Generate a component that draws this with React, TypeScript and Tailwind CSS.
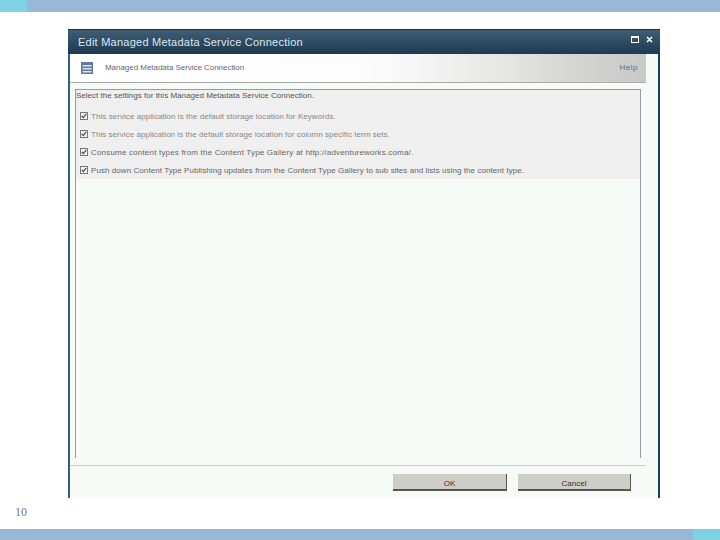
const rows = [
  { text: "This service application is the default storage location for Keywords.", cls: "text-[#888] tracking-[0.06px]" },
  { text: "This service application is the default storage location for column specific term sets.", cls: "text-[#888] tracking-[0.04px]" },
  { text: "Consume content types from the Content Type Gallery at http://adventureworks.coma/.", cls: "text-[#666] tracking-[0.19px]" },
  { text: "Push down Content Type Publishing updates from the Content Type Gallery to sub sites and lists using the content type.", cls: "text-[#666] tracking-[0.07px]" },
];

function Check() {
  return (
    <span className="flex h-[8px] w-[8px] shrink-0 items-center justify-center border border-[#777] bg-[#f4f4f4]">
      <svg width="6" height="6" viewBox="0 0 6 6" fill="none">
        <path d="M0.7 2.8 L2.3 4.7 L5.3 0.8" stroke="#444" strokeWidth="1.1" />
      </svg>
    </span>
  );
}

export default function App() {
  return (
    <div className="flex h-[540px] w-[720px] flex-col bg-white font-['Liberation_Sans',sans-serif]">
      <div className="flex h-3 shrink-0 bg-[#97b8d6]">
        <div className="w-[27px] bg-[#7fd1e4]" />
      </div>

      <div className="flex h-[486px] shrink-0 flex-col pt-[17px] pl-[68px]">
        <div className="flex h-[469px] w-[592px] flex-col border-r-2 border-l-2 border-r-[#17405f] border-l-[#2f6282] bg-[#f7fbf8]">
          <div className="-mx-0.5 flex h-[25px] shrink-0 items-center justify-between border-t border-[#1b3347] bg-gradient-to-b from-[#3f5d75] to-[#1d3a52] pr-[7px] pl-[10px]">
            <span className="text-[11px] leading-none tracking-[0.24px] text-[#dfe6eb]">
              Edit Managed Metadata Service Connection
            </span>
            <span className="mb-[6px] flex items-center gap-[7px]">
              <span className="h-[7px] w-[8px] border border-t-2 border-white" />
              <svg width="7" height="7" viewBox="0 0 7 7">
                <path d="M1 1 L6 6 M6 1 L1 6" stroke="#fff" strokeWidth="1.6" />
              </svg>
            </span>
          </div>

          <div className="flex h-[29px] w-[576px] shrink-0 items-center justify-between border-b border-[#a9aca8] bg-[linear-gradient(to_right,#ffffff_0%,#fdfdfd_50%,#f5f6f5_60%,#e6e7e5_75%,#d4d5d2_88%,#c9cac7_100%)] pr-[8px] pl-[11px]">
            <span className="flex items-center gap-[12px]">
              <svg width="12" height="12" viewBox="0 0 12 12">
                <rect x="0" y="0" width="12" height="12" fill="#5f7a9e" />
                <rect x="1.5" y="3" width="9" height="1.5" fill="#dfe6ee" />
                <rect x="1.5" y="6" width="9" height="1.5" fill="#dfe6ee" />
                <rect x="1.5" y="9" width="9" height="1.5" fill="#dfe6ee" />
              </svg>
              <span className="text-[8px] tracking-[-0.04px] text-[#667]">Managed Metadata Service Connection</span>
            </span>
            <span className="text-[8px] tracking-[0.5px] text-[#4a7096]">Help</span>
          </div>

          <div className="mt-[6px] ml-[5px] h-[369px] w-[566px] shrink-0 border-x border-t border-[#8d9ea6]">
            <div className="h-[89px] bg-[#efefef]">
              <div className="h-[12px] text-[8px] leading-[11px] tracking-[0.02px] text-[#555]">
                Select the settings for this Managed Metadata Service Connection.
              </div>
              <div className="flex flex-col gap-[9px] pt-[9px] pl-[4px]">
                {rows.map((r) => (
                  <div key={r.text} className="flex h-[9px] items-center gap-[3px]">
                    <Check />
                    <span className={`pt-[1px] text-[8px] leading-[9px] whitespace-nowrap ${r.cls}`}>{r.text}</span>
                  </div>
                ))}
              </div>
            </div>
          </div>

          <div className="mt-[7px] h-px w-[576px] shrink-0 bg-[#c6cfc4]" />

          <div className="flex w-[561px] justify-end gap-[11px] pt-[8px]">
            <button className="flex h-[17px] w-[114px] items-center justify-center border-r border-b-2 border-r-[#555] border-b-[#555] bg-[#cfcdc8] pt-[4px] text-[8px] text-[#333]">
              OK
            </button>
            <button className="flex h-[17px] w-[113px] items-center justify-center border-r border-b-2 border-r-[#555] border-b-[#555] bg-[#cfcdc8] pt-[4px] text-[8px] text-[#333]">
              Cancel
            </button>
          </div>
        </div>
      </div>

      <div className="flex h-[31px] shrink-0 items-start pt-[7px] pl-[15px] font-['Liberation_Serif',serif] text-[12px] leading-[14px] text-[#777]">
        10
      </div>

      <div className="flex h-[11px] shrink-0 justify-end bg-[#97b8d6]">
        <div className="w-[27px] bg-[#7fd1e4]" />
      </div>
    </div>
  );
}
